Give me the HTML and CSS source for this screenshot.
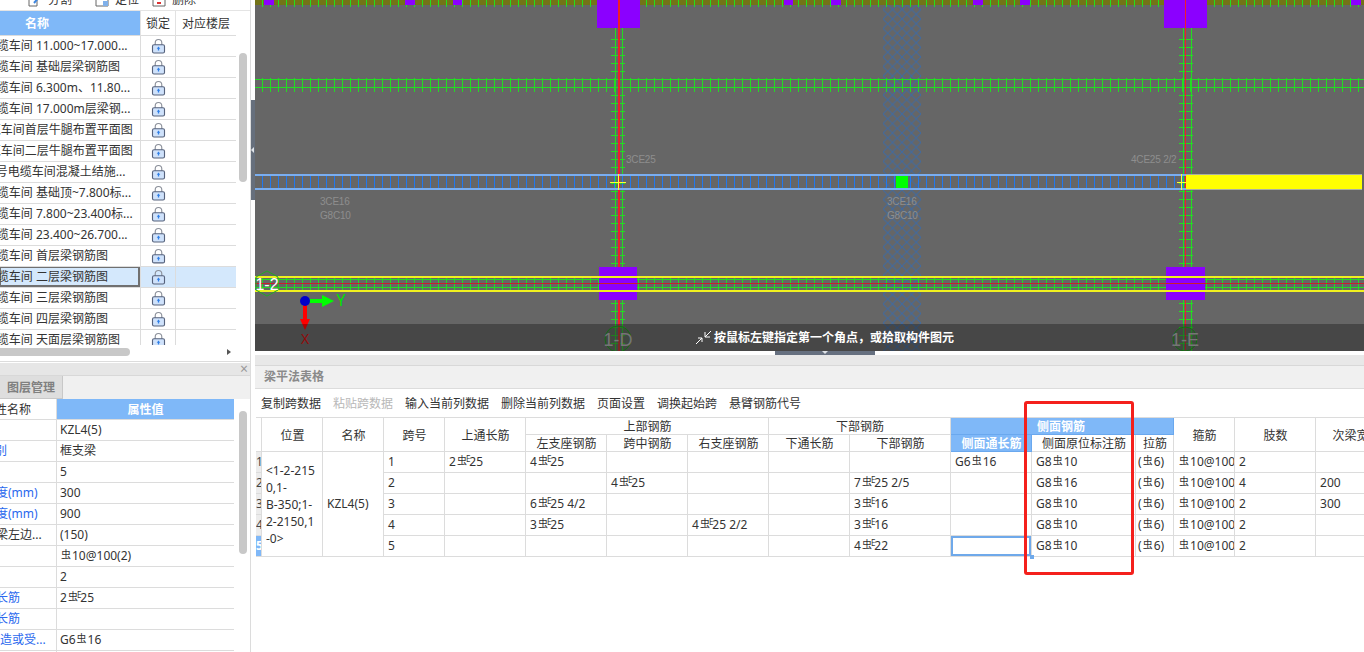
FILE: index.html
```html
<!DOCTYPE html>
<html lang="zh">
<head>
<meta charset="utf-8">
<title>梁平法表格</title>
<link rel="stylesheet" href="styles.css">
</head>
<body>
<svg class="defs" width="0" height="0" aria-hidden="true">
  <defs>
    <symbol id="lock" viewBox="0 0 16 16">
      <path d="M4.5 7V4.5a3.5 3.5 0 0 1 7 0V7" fill="none" stroke="#8a8f99" stroke-width="1.2"/>
      <rect x="1.6" y="6.6" width="12.8" height="8.8" rx="1.6" fill="#cfe2fb" stroke="#56627c" stroke-width="1.2"/>
      <path d="M8 8.6l1.9 2.2H8.7v2H7.3v-2H6.1z" fill="#2f7fe8"/>
    </symbol>
  </defs>
</svg>
<div class="app">
  <aside class="side">
    <section class="drawings">
      <div class="mini-tools">
        <span class="mini"><svg class="mini-ic" viewBox="0 0 14 14"><path d="M1 1h8v12H1z" fill="none" stroke="#666"/><path d="M6 10l6-7" stroke="#3d86e0" stroke-width="2"/></svg>分割</span>
        <span class="mini"><svg class="mini-ic" viewBox="0 0 14 14"><path d="M1 1h12v12H1z" fill="none" stroke="#666"/><path d="M8 8h5v5H8z" fill="#7fb0ea"/></svg>定位</span>
        <span class="mini"><svg class="mini-ic" viewBox="0 0 14 14"><path d="M1 1h12v12H1z" fill="none" stroke="#666"/><path d="M5 10h4" stroke="#d33" stroke-width="2"/></svg>删除</span>
      </div>
      <div class="list-wrap">
        <table class="list">
          <colgroup><col class="c-name"><col class="c-lock"><col class="c-floor"></colgroup>
          <thead><tr><th class="hd-blue hd-name">名称</th><th>锁定</th><th>对应楼层</th></tr></thead>
          <tbody>
            <tr><td class="name cut-a">1号电缆车间 11.000~17.000...</td><td class="lk"><svg class="lock"><use href="#lock"/></svg></td><td></td></tr>
            <tr><td class="name cut-a">1号电缆车间 基础层梁钢筋图</td><td class="lk"><svg class="lock"><use href="#lock"/></svg></td><td></td></tr>
            <tr><td class="name cut-a">1号电缆车间 6.300m、11.80...</td><td class="lk"><svg class="lock"><use href="#lock"/></svg></td><td></td></tr>
            <tr><td class="name cut-a">1号电缆车间 17.000m层梁钢...</td><td class="lk"><svg class="lock"><use href="#lock"/></svg></td><td></td></tr>
            <tr><td class="name cut-b">1号电缆车间首层牛腿布置平面图</td><td class="lk"><svg class="lock"><use href="#lock"/></svg></td><td></td></tr>
            <tr><td class="name cut-b">1号电缆车间二层牛腿布置平面图</td><td class="lk"><svg class="lock"><use href="#lock"/></svg></td><td></td></tr>
            <tr><td class="name cut-c">1号电缆车间混凝土结施...</td><td class="lk"><svg class="lock"><use href="#lock"/></svg></td><td></td></tr>
            <tr><td class="name cut-a">1号电缆车间 基础顶~7.800标...</td><td class="lk"><svg class="lock"><use href="#lock"/></svg></td><td></td></tr>
            <tr><td class="name cut-a">1号电缆车间 7.800~23.400标...</td><td class="lk"><svg class="lock"><use href="#lock"/></svg></td><td></td></tr>
            <tr><td class="name cut-a">1号电缆车间 23.400~26.700...</td><td class="lk"><svg class="lock"><use href="#lock"/></svg></td><td></td></tr>
            <tr><td class="name cut-a">1号电缆车间 首层梁钢筋图</td><td class="lk"><svg class="lock"><use href="#lock"/></svg></td><td></td></tr>
            <tr class="sel"><td class="name cut-a">1号电缆车间 二层梁钢筋图</td><td class="lk"><svg class="lock"><use href="#lock"/></svg></td><td></td></tr>
            <tr><td class="name cut-a">1号电缆车间 三层梁钢筋图</td><td class="lk"><svg class="lock"><use href="#lock"/></svg></td><td></td></tr>
            <tr><td class="name cut-a">1号电缆车间 四层梁钢筋图</td><td class="lk"><svg class="lock"><use href="#lock"/></svg></td><td></td></tr>
            <tr><td class="name cut-a">1号电缆车间 天面层梁钢筋图</td><td class="lk"><svg class="lock"><use href="#lock"/></svg></td><td></td></tr>
          </tbody>
        </table>
      </div>
      <div class="sb-v sb-list"></div>
      <div class="sb-h"></div>
      <div class="sb-arrow"></div>
    </section>
    <section class="props">
      <div class="props-bar"><span class="close">×</span></div>
      <div class="tabs"><span class="tab">图层管理</span></div>
      <table class="ptable">
        <colgroup><col class="p-label"><col class="p-value"></colgroup>
        <thead><tr><th class="plabel-h cut-s">属性名称</th><th class="hd-blue">属性值</th></tr></thead>
        <tbody>
          <tr><td class="lbl"></td><td>KZL4(5)</td></tr>
          <tr><td class="lbl cut-s link">类别</td><td>框支梁</td></tr>
          <tr><td class="lbl"></td><td>5</td></tr>
          <tr><td class="lbl cut-l link">截面宽度(mm)</td><td>300</td></tr>
          <tr><td class="lbl cut-l link">截面高度(mm)</td><td>900</td></tr>
          <tr><td class="lbl cut-l">轴线距梁左边...</td><td>(150)</td></tr>
          <tr><td class="lbl"></td><td><i class="rb">虫</i>10@100(2)</td></tr>
          <tr><td class="lbl"></td><td>2</td></tr>
          <tr><td class="lbl cut-l link">上部通长筋</td><td>2<i class="rb">虫</i><i class="re">E</i>25</td></tr>
          <tr><td class="lbl cut-l link">下部通长筋</td><td></td></tr>
          <tr><td class="lbl cut-m link">构造或受...</td><td>G6<i class="rb">虫</i>16</td></tr>
          <tr><td class="lbl"></td><td></td></tr>
        </tbody>
      </table>
      <div class="sb-v sb-props"></div>
    </section>
    <div class="side-handle"></div>
  </aside>

  <main class="main">
    <div class="canvas">
      <svg class="cad" width="1109" height="351" viewBox="255 0 1109 351" shape-rendering="crispEdges">
        <defs>
          <pattern id="hatch" patternUnits="userSpaceOnUse" x="883" y="0" width="9.5" height="9.5"><path d="M0 0L9.5 9.5M9.5 0L0 9.5" stroke="#406aa0" stroke-width="1" shape-rendering="auto"/></pattern>
        </defs>

        <rect x="883" y="0" width="38" height="351" fill="url(#hatch)"/>

        <rect x="255" y="0" width="1109" height="5" fill="#737318"/>
        <g class="tick-h">
          <line x1="254" y1="3.5" x2="1364" y2="3.5" stroke-width="7"/>
        </g>
        <g fill="#8b00ff">
          <rect x="264" y="0" width="10" height="5"/><rect x="405" y="0" width="10" height="5"/>
          <rect x="453" y="0" width="9" height="5"/><rect x="784" y="0" width="9" height="5"/>
          <rect x="831" y="0" width="10" height="5"/><rect x="973" y="0" width="10" height="5"/>
          <rect x="1020" y="0" width="10" height="5"/><rect x="1351" y="0" width="10" height="5"/>
        </g>

        <rect x="255" y="79" width="1109" height="1" fill="#22dd22"/>
        <rect x="255" y="87" width="1109" height="1" fill="#22dd22"/>
        <g class="tick-h"><line x1="254" y1="85" x2="1364" y2="85" stroke-width="14"/></g>

        <g class="tick-v">
          <line x1="618" y1="39" x2="618" y2="351" stroke-width="14"/>
          <line x1="1186" y1="39" x2="1186" y2="351" stroke-width="14"/>
        </g>
        <rect x="615" y="28" width="1" height="323" fill="#22dd22"/>
        <rect x="622" y="28" width="1" height="323" fill="#22dd22"/>
        <rect x="618" y="0" width="2" height="351" fill="#f01e28"/>

        <rect x="1183" y="28" width="1" height="323" fill="#22dd22"/>
        <rect x="1191" y="28" width="1" height="323" fill="#22dd22"/>
        <rect x="1185" y="0" width="1" height="351" fill="#f01e28"/>

        <rect x="597" y="0" width="43" height="28" fill="#8b00ff"/>
        <rect x="1164" y="0" width="43" height="28" fill="#8b00ff"/>
        <rect x="618" y="0" width="2" height="28" fill="#f01e28"/>
        <rect x="1185" y="0" width="1" height="28" fill="#f01e28"/>

        <line class="tick-b" x1="254" y1="182" x2="1186" y2="182" stroke-width="14"/>
        <rect x="255" y="174" width="931" height="2" fill="#7aaef0"/>
        <rect x="255" y="188" width="931" height="2" fill="#7aaef0"/>
        <rect x="1186" y="174" width="176" height="16" fill="#aab0a0"/>
        <rect x="1186" y="175" width="176" height="14" fill="#ffff00"/>
        <rect x="896" y="176" width="12" height="12" fill="#00ff00"/>
        <path d="M610 182h16M618 174v16M1177 182h9M1181 174v16" stroke="#ffff33" stroke-width="1" fill="none"/>

        <rect x="255" y="279" width="1109" height="1" fill="#22dd22"/>
        <rect x="255" y="287" width="1109" height="1" fill="#22dd22"/>
        <g class="tick-h"><line x1="254" y1="283.5" x2="1364" y2="283.5" stroke-width="13"/></g>
        <rect x="599" y="267" width="38" height="33" fill="#8b00ff"/>
        <rect x="1166" y="267" width="39" height="33" fill="#8b00ff"/>
        <rect x="255" y="283" width="1109" height="1" fill="#c8202a"/>
        <rect x="255" y="276" width="1109" height="2" fill="#f0f01e"/>
        <rect x="255" y="290" width="1109" height="2" fill="#f0f01e"/>

        <g class="cad-note">
          <text x="626" y="163">3CE25</text>
          <text x="1131" y="163">4CE25 2/2</text>
          <text x="320" y="205">3CE16</text>
          <text x="320" y="219">G8C10</text>
          <text x="887" y="205">3CE16</text>
          <text x="887" y="219">G8C10</text>
        </g>

        <g shape-rendering="auto">
          <path d="M267 271l11 6v13l-11 6-11-6v-13z" fill="none" stroke="#22aa22"/>
          <text class="axis-white" x="267" y="290">1-2</text>
          <path d="M305 301h19" stroke="#00ff00" stroke-width="4"/>
          <path d="M322 295l12 6-12 6z" fill="#00ff00"/>
          <path d="M305 301v19" stroke="#ff0000" stroke-width="4"/>
          <path d="M300 319l5 11 5-11z" fill="#ff0000"/>
          <circle cx="305" cy="301" r="5" fill="#0000c8"/>
          <text class="axis-y" x="341" y="306">Y</text>
          <text class="axis-x" x="305" y="344">X</text>
          <circle cx="618" cy="339" r="13" fill="#4a6a4a" fill-opacity=".35" stroke="#1f9a1f"/>
          <circle cx="1185" cy="339" r="12" fill="#4a6a4a" fill-opacity=".35" stroke="#1f9a1f"/>
          <text class="axis-grid" x="618" y="346">1-D</text>
          <text class="axis-grid" x="1185" y="346">1-E</text>
        </g>

        <rect x="255" y="324" width="1109" height="27" fill="#000" fill-opacity=".3"/>

        <g shape-rendering="auto" fill="none" stroke="#fff" stroke-width="1">
          <path d="M696 344l6-6M702 342v-4h-4M711 331l-6 6M705 332v5h5"/>
        </g>
        <text class="hint" x="714" y="342">按鼠标左键指定第一个角点，或拾取构件图元</text>
      </svg>
    </div>
    <div class="grip-row"><div class="grip"></div></div>
    <div class="divider"></div>
    <div class="panel-title">梁平法表格</div>
    <div class="tb">
      <span>复制跨数据</span><span class="off">粘贴跨数据</span><span>输入当前列数据</span><span>删除当前列数据</span><span>页面设置</span><span>调换起始跨</span><span>悬臂钢筋代号</span>
    </div>
    <table class="grid">
      <colgroup>
        <col class="w6"><col class="w61"><col class="w61"><col class="w61"><col class="w81"><col class="w81"><col class="w81"><col class="w81"><col class="w81"><col class="w101"><col class="w81"><col class="w104"><col class="w38"><col class="w61"><col class="w81"><col class="w81">
      </colgroup>
      <thead>
        <tr>
          <th rowspan="2" class="corner"></th>
          <th rowspan="2">位置</th><th rowspan="2">名称</th><th rowspan="2">跨号</th><th rowspan="2">上通长筋</th>
          <th colspan="3">上部钢筋</th><th colspan="2">下部钢筋</th>
          <th colspan="3" class="blue group">侧面钢筋</th>
          <th rowspan="2">箍筋</th><th rowspan="2">肢数</th><th rowspan="2">次梁宽度</th>
        </tr>
        <tr>
          <th>左支座钢筋</th><th>跨中钢筋</th><th>右支座钢筋</th><th>下通长筋</th><th>下部钢筋</th>
          <th class="blue">侧面通长筋</th><th>侧面原位标注筋</th><th>拉筋</th>
        </tr>
      </thead>
      <tbody>
        <tr>
          <td class="rh">1</td>
          <td rowspan="5" class="pos">&lt;1-2-215<br>0,1-<br>B-350;1-<br>2-2150,1<br>-0&gt;</td>
          <td rowspan="5">KZL4(5)</td>
          <td>1</td><td>2<i class="rb">虫</i><i class="re">E</i>25</td><td>4<i class="rb">虫</i><i class="re">E</i>25</td><td></td><td></td><td></td><td></td>
          <td>G6<i class="rb">虫</i>16</td><td>G8<i class="rb">虫</i>10</td><td class="tie">(<i class="rb">虫</i>6)</td><td><i class="rb">虫</i>10@100</td><td>2</td><td></td>
        </tr>
        <tr>
          <td class="rh">2</td>
          <td>2</td><td></td><td></td><td>4<i class="rb">虫</i><i class="re">E</i>25</td><td></td><td></td><td>7<i class="rb">虫</i><i class="re">E</i>25 2/5</td>
          <td></td><td>G8<i class="rb">虫</i>16</td><td class="tie">(<i class="rb">虫</i>6)</td><td><i class="rb">虫</i>10@100</td><td>4</td><td>200</td>
        </tr>
        <tr>
          <td class="rh">3</td>
          <td>3</td><td></td><td>6<i class="rb">虫</i><i class="re">E</i>25 4/2</td><td></td><td></td><td></td><td>3<i class="rb">虫</i><i class="re">E</i>16</td>
          <td></td><td>G8<i class="rb">虫</i>10</td><td class="tie">(<i class="rb">虫</i>6)</td><td><i class="rb">虫</i>10@100</td><td>2</td><td>300</td>
        </tr>
        <tr>
          <td class="rh">4</td>
          <td>4</td><td></td><td>3<i class="rb">虫</i><i class="re">E</i>25</td><td></td><td>4<i class="rb">虫</i><i class="re">E</i>25 2/2</td><td></td><td>3<i class="rb">虫</i><i class="re">E</i>16</td>
          <td></td><td>G8<i class="rb">虫</i>10</td><td class="tie">(<i class="rb">虫</i>6)</td><td><i class="rb">虫</i>10@100</td><td>2</td><td></td>
        </tr>
        <tr>
          <td class="rh cur">5</td>
          <td>5</td><td></td><td></td><td></td><td></td><td></td><td>4<i class="rb">虫</i><i class="re">E</i>22</td>
          <td class="active"><span class="fill-handle"></span></td><td>G8<i class="rb">虫</i>10</td><td class="tie">(<i class="rb">虫</i>6)</td><td><i class="rb">虫</i>10@100</td><td>2</td><td></td>
        </tr>
      </tbody>
    </table>
  </main>
</div>
<div class="callout"></div>
</body>
</html>
```
FILE: styles.css
```css
* { box-sizing: border-box; }
html, body { margin: 0; height: 100%; overflow: hidden; background: #fff; }
body {
  font: 12px/16px "Noto Sans", "Noto Sans CJK SC", sans-serif;
  color: #333;
  position: relative;
}
.defs { position: absolute; }
.app { display: flex; width: 1364px; height: 652px; }

/* left column */
.side { width: 255px; flex: none; position: relative; display: flex; flex-direction: column; background: #fff; }
.drawings { position: relative; height: 362px; width: 251px; border-right: 1px solid #dcdcdc; border-bottom: 1px solid #dcdcdc; flex: none; }
.mini-tools { height: 11px; border-bottom: 1px solid #e4e4e4; overflow: hidden; display: flex; align-items: flex-end; padding: 0 0 3px 28px; gap: 13px; }
.mini { display: flex; align-items: center; gap: 6px; flex: none; line-height: 14px; }
.mini:first-child { margin-right: 10px; }
.mini-ic { width: 14px; height: 14px; }
.list-wrap { height: 334px; width: 236px; overflow: hidden; }
.list, .ptable { border-collapse: separate; border-spacing: 0; table-layout: fixed; }
.list { width: 236px; }
.c-name { width: 141px; }
.c-lock { width: 35px; }
.c-floor { width: 60px; }
.list th { height: 25px; font-weight: 400; border-right: 1px solid #e2e2e2; border-bottom: 1px solid #dcdcdc; padding: 1px 0 0; }
.list th:last-child { border-right: 0; }
.hd-blue { background: #7fb8f8; color: #fff; font-weight: 700 !important; }
.list .hd-name { text-align: left; padding-left: 25px; }
.list td { height: 21px; padding: 0; border-right: 1px solid #dcdcdc; border-bottom: 1px solid #dcdcdc; white-space: nowrap; overflow: hidden; }
.list td:last-child { border-right: 0; }
.cut-a { text-indent: -34px; }
.cut-b { text-indent: -42px; }
.cut-c { text-indent: -11px; }
.list .lk { text-align: center; line-height: 0; padding: 0; }
.lock { width: 15px; height: 16px; display: inline-block; vertical-align: middle; }
.sel td { background: #d4e8fc; }
.sel .name { box-shadow: inset 0 0 0 1px #707070, inset -1px -1px 0 1px #707070; }

.sb-v { position: absolute; left: 239px; width: 8px; background: #c8c8c8; border-radius: 4px; }
.sb-list { top: 53px; height: 129px; }
.sb-h { position: absolute; left: 0; top: 348px; width: 130px; height: 8px; background: #c8c8c8; border-radius: 0 4px 4px 0; }
.sb-arrow { position: absolute; left: 227px; top: 349px; border-left: 4px solid #555; border-top: 3.5px solid transparent; border-bottom: 3.5px solid transparent; }

.props { position: relative; width: 251px; flex: 1; border-right: 1px solid #dcdcdc; overflow: hidden; }
.props-bar { height: 13px; margin-top: 1px; background: #e6e6e6; position: relative; border-bottom: 1px solid #d8d8d8; }
.close { position: absolute; right: 2px; top: 0; color: #999; font-size: 14px; line-height: 12px; }
.tabs { height: 23px; background: #f0f0f0; }
.tab { display: block; width: 63px; height: 23px; background: #dedede; border-right: 1px solid #c8c8c8; border-bottom: 1px solid #c8c8c8; padding-left: 7px; line-height: 23px; font-weight: 700; color: #808080; }
.ptable { width: 234px; }
.p-label { width: 57px; }
.p-value { width: 177px; }
.ptable th { height: 21px; padding: 1px 0 0; border-bottom: 1px solid #dcdcdc; }
.plabel-h { font-weight: 400; text-align: left; white-space: nowrap; overflow: hidden; border-right: 1px solid #dcdcdc; }
.ptable td { height: 21px; padding: 0 0 0 3px; border-bottom: 1px solid #dcdcdc; white-space: nowrap; overflow: hidden; }
.ptable .lbl { padding: 0; border-right: 1px solid #dcdcdc; }
.link { color: #2a68ee; }
.cut-s { text-indent: -17px; }
.cut-l { text-indent: -40px; }
.cut-m { text-indent: -12px; }
.sb-props { top: 49px; height: 143px; }
.side-handle { position: absolute; left: 251px; top: 100px; width: 4px; height: 100px; background: #666f7c; }
.side-handle::after { content: ""; position: absolute; left: 0; top: 47px; border-right: 3px solid #dfe3e8; border-top: 3px solid transparent; border-bottom: 3px solid transparent; }

/* rebar symbols */
.rb { font-style: normal; font-size: 10px; line-height: 1; position: relative; top: -2px; margin: 0 1px; font-family: "Noto Sans CJK SC", sans-serif; }
.re { font-style: normal; font-size: 8px; line-height: 1; position: relative; top: -4px; margin-left: -2px; margin-right: -1px; }

/* main */
.main { flex: 1; min-width: 0; overflow: hidden; display: flex; flex-direction: column; }
.canvas { height: 351px; background: #666; flex: none; }
.cad { display: block; }
.tick-h line { stroke: #22dd22; stroke-dasharray: 1 7; }
.tick-v line { stroke: #22dd22; stroke-dasharray: 1 7; }
.tick-b { stroke: #1f78f0; stroke-dasharray: 1 7; }
.cad-note text { font: 10px "Liberation Sans", sans-serif; fill: #8e8e8e; letter-spacing: -.2px; }
.axis-white { font: 16px "Liberation Sans", sans-serif; fill: #fff; text-anchor: middle; }
.axis-y { font: 16px "Noto Sans", sans-serif; fill: #00e000; text-anchor: middle; }
.axis-x { font: 14px "Noto Sans", sans-serif; fill: #d01010; text-anchor: middle; }
.axis-grid { font: 18px "Liberation Sans", sans-serif; fill: #a8a8a8; text-anchor: middle; }
.hint { font: 700 12px "Noto Sans CJK SC", sans-serif; fill: #fff; }
.grip-row { height: 4px; flex: none; background: #fff; }
.grip { width: 100px; height: 4px; margin-left: 520px; background: #667080; position: relative; }
.grip::after { content: ""; position: absolute; left: 47px; top: 0; border-top: 3px solid #dfe3e8; border-left: 3px solid transparent; border-right: 3px solid transparent; }
.divider { height: 11px; flex: none; background: #e8e8e8; border-bottom: 1px solid #d8d8d8; }
.panel-title { height: 23px; flex: none; padding-left: 9px; line-height: 21px; font-weight: 700; color: #8a8a8a; background: #f0f0f0; border-bottom: 1px solid #dcdcdc; }
.tb { height: 28px; flex: none; display: flex; align-items: center; gap: 12px; padding: 2px 0 0 6px; }
.tb span { flex: none; }
.tb .off { color: #b8b8b8; }

.grid { border-collapse: separate; border-spacing: 0; table-layout: fixed; width: 1141px; margin-left: 1px; border-top: 1px solid #dcdcdc; flex: none; }
.w6 { width: 6px; } .w38 { width: 38px; } .w61 { width: 61px; } .w81 { width: 81px; } .w101 { width: 101px; } .w104 { width: 104px; }
.grid th { height: 17px; padding: 1px 0 0 1px; font-weight: 400; line-height: 15px; border-right: 1px solid #dcdcdc; border-bottom: 1px solid #dcdcdc; white-space: nowrap; overflow: hidden; }
.grid .blue { background: #7fb8f8; color: #fff; font-weight: 700; border-color: #6aa8ee; }
.grid .group { text-align: left; padding-left: 86px; }
.grid td { height: 21px; padding: 0 0 0 4px; border-right: 1px solid #dcdcdc; border-bottom: 1px solid #dcdcdc; white-space: nowrap; overflow: hidden; }
.grid .tie { padding-left: 2px; }
.grid .rh { padding: 0; background: #ececec; color: #444; text-align: left; }
.grid .cur { background: #7fb8f8; color: #fff; font-weight: 700; }
.grid .pos { line-height: 17px; }
.grid .active { position: relative; box-shadow: inset 0 0 0 2px #6fa9ea; overflow: visible; }
.fill-handle { position: absolute; right: -3px; bottom: -3px; width: 4px; height: 4px; background: #6fa9ea; }

.callout { position: absolute; left: 1024px; top: 401px; width: 110px; height: 174px; border: 3px solid #f4201c; border-radius: 3px; }
```
